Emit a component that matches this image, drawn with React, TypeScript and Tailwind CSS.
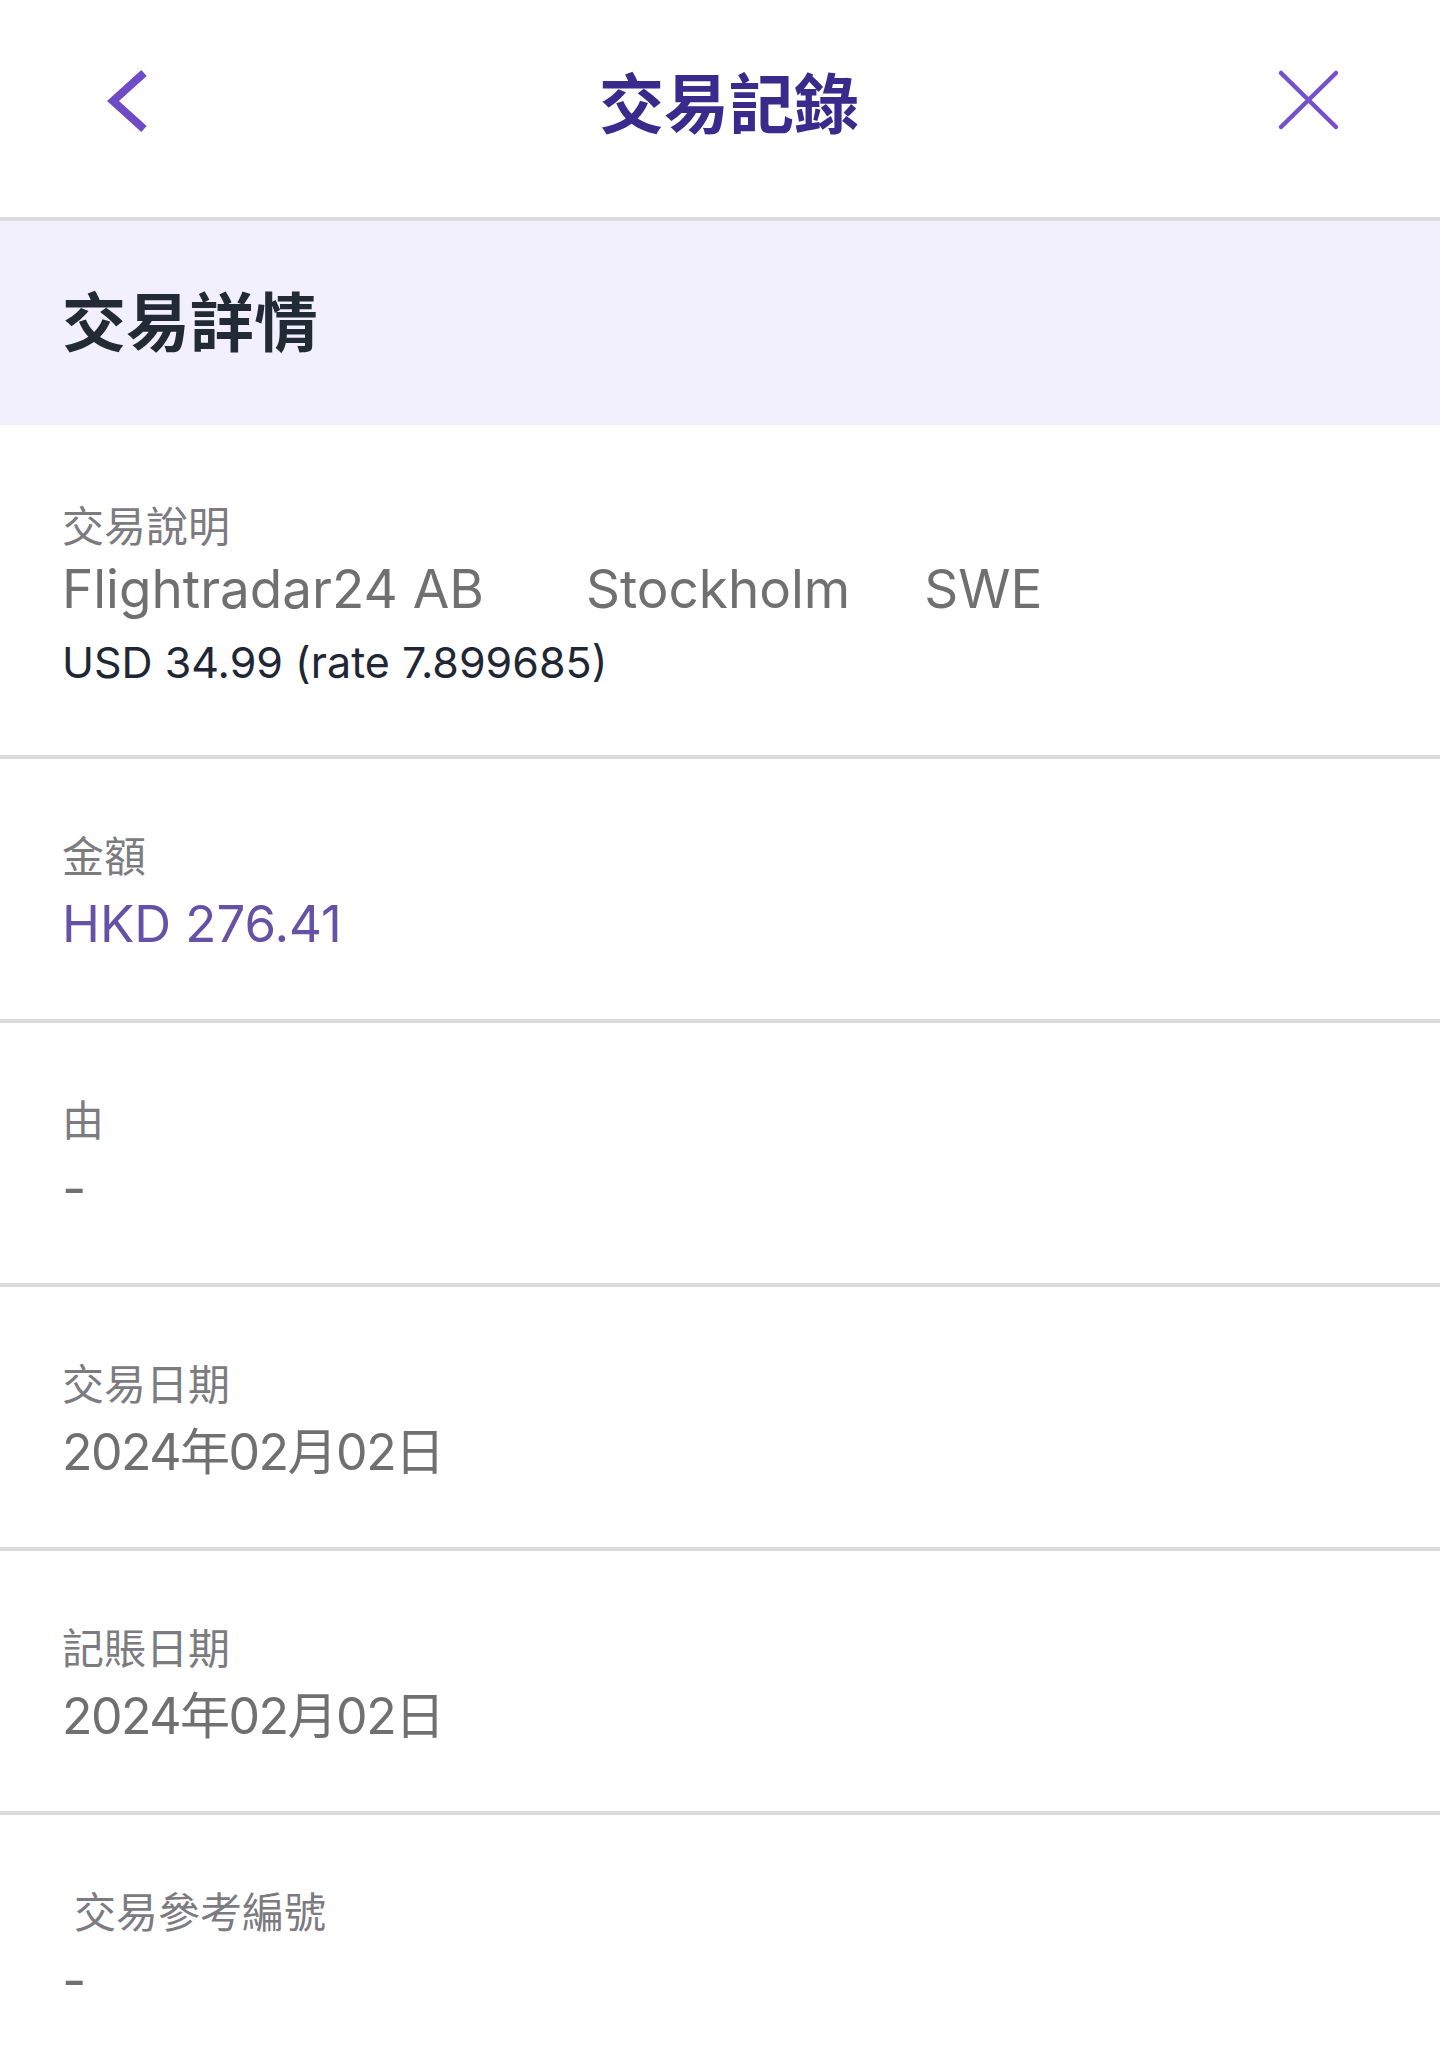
import React from 'react';

interface RowProps {
  label: string;
  children: React.ReactNode;
  labelClass?: string;
  valueClass?: string;
}

function Row({ label, children, labelClass = '', valueClass = 'text-[53px] text-[#707070]' }: RowProps) {
  return (
    <div className="border-b-4 border-[#dadadd] pl-[62px] pt-[73px] pb-[63px]">
      <div className={`text-[42px] leading-[50px] text-[#7b7b80] ${labelClass}`}>{label}</div>
      <div className={`mt-[10px] leading-[64px] ${valueClass}`}>{children}</div>
    </div>
  );
}

export default function App() {
  return (
    <div className="min-h-screen bg-white font-['Inter','Noto_Sans_CJK_TC',sans-serif]">
      {/* top bar */}
      <div className="flex h-[221px] items-start border-b-4 border-[#dcdcdf] pt-[64px]">
        <div className="w-[154px] pl-[104px]">
          <svg width="50" height="72" viewBox="0 0 50 72" fill="none">
            <path d="M40 9 L9 37 L40 65" stroke="#6f4bc8" strokeWidth="8" strokeLinejoin="miter" />
          </svg>
        </div>
        <div className="flex-1 pl-[32px] pt-[9px] text-center text-[65px] font-bold leading-[64px] text-[#3a2a8c]">
          交易記錄
        </div>
        <div className="w-[168px]">
          <svg width="72" height="72" viewBox="0 0 72 72" fill="none">
            <path d="M9 9 L64 63 M64 9 L9 63" stroke="#7650cc" strokeWidth="4.5" strokeLinecap="round" />
          </svg>
        </div>
      </div>

      {/* section title */}
      <div className="flex h-[204px] items-center bg-[#f2f0fc] pl-[62px]">
        <h2 className="text-[64px] font-bold leading-[64px] text-[#222a36]">交易詳情</h2>
      </div>

      {/* description */}
      <div className="border-b-4 border-[#dadadd] pl-[62px] pt-[77px] pb-[68px]">
        <div className="text-[42px] leading-[50px] text-[#7b7b80]">交易說明</div>
        <div className="mt-[5px] text-[53px] leading-[64px] text-[#707070]">
          <span>Flightradar24 AB</span>
          <span className="ml-[102px]">Stockholm</span>
          <span className="ml-[74px]">SWE</span>
        </div>
        <div className="mt-[16px] text-[43px] leading-[50px] text-[#1f2635]">USD 34.99 (rate 7.899685)</div>
      </div>

      <Row label="金額" valueClass="text-[51px] text-[#6552a6]">HKD 276.41</Row>
      <Row label="由">-</Row>
      <Row label="交易日期" valueClass="text-[50px] tracking-[-1.5px] text-[#707070]">2024年02月02日</Row>
      <Row label="記賬日期" valueClass="text-[50px] tracking-[-1.5px] text-[#707070]">2024年02月02日</Row>
      <Row label="交易參考編號" labelClass="pl-[12px]">-</Row>
    </div>
  );
}
